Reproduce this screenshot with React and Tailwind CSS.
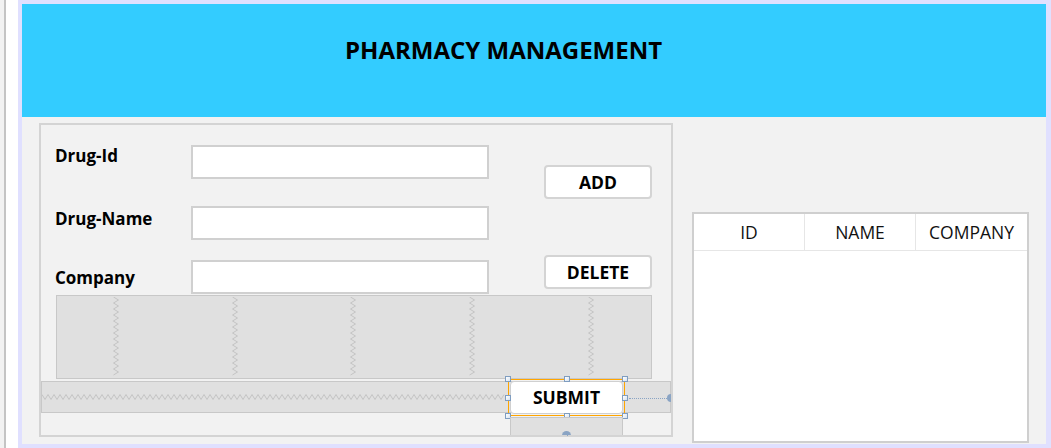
import React from 'react';

const font = { fontFamily: '"Open Sans", "Noto Sans", sans-serif' };

// zigzag polyline points, used for the designer's gap markers
const zigzag = (length, period, amp, vertical) => {
    const pts = [];
    const steps = Math.floor(length / (period / 2));
    for (let i = 0; i <= steps; i++) {
        const a = (i * period) / 2;
        const b = i % 2 === 0 ? 0.5 : amp + 0.5;
        pts.push(vertical ? `${b},${a}` : `${a},${b}`);
    }
    return pts.join(' ');
};

const Handle = ({ className }) => (
    <span className={`absolute w-[6px] h-[6px] border border-[#7f9dc0] bg-gradient-to-br from-white to-[#d6e2f0] ${className}`}></span>
);

const Field = ({ label, labelOffset, className }) => (
    <div className={`flex items-start ${className}`}>
        <label className={`w-[136px] text-[17px] leading-[22px] font-bold text-black ${labelOffset}`}>{label}</label>
        <input className="w-[298px] h-[34px] bg-white border-2 border-[#d0d0d0] outline-none" />
    </div>
);

const Button = ({ children, className }) => (
    <button className={`w-[108px] h-[34px] bg-white border-2 border-[#d4d4d4] rounded-[4px] text-[17.5px] font-bold text-black ${className}`}>
        {children}
    </button>
);

const App = () => {
    return (
        <div className="flex w-[1051px] h-[448px] overflow-hidden bg-[#e0e0ff]" style={font}>
            <div className="w-[4px] bg-[#f2f2f2]"></div>
            <div className="w-[2px] bg-[#c4c4c4]"></div>
            <div className="w-[12px] bg-white"></div>
            <div className="w-[4px]"></div>

            <div className="flex flex-col w-[1024px] mt-[4px] h-[440px]">
                {/* Header */}
                <div className="h-[113px] bg-[#33ccff] pl-[323px] pt-[30px]">
                    <h1 className="text-[24px] leading-[32px] font-bold text-black">PHARMACY MANAGEMENT</h1>
                </div>

                {/* Body */}
                <div className="flex flex-1 bg-[#f2f2f2]">
                    {/* Form panel */}
                    <div className="ml-[17px] mt-[6px] w-[634px] h-[314px] border-2 border-[#d4d4d4] flex flex-col">
                        <div className="flex h-[170px]">
                            <div className="pl-[14px] pt-[20px]">
                                <Field label="Drug-Id" labelOffset="mt-0" />
                                <Field label="Drug-Name" labelOffset="mt-[2px]" className="mt-[27px]" />
                                <Field label="Company" labelOffset="mt-[7px]" className="mt-[20px]" />
                            </div>
                            <div className="flex flex-col ml-[55px] pt-[40px]">
                                <Button>ADD</Button>
                                <Button className="mt-[56px]">DELETE</Button>
                            </div>
                        </div>

                        {/* gap area */}
                        <div className="ml-[15px] w-[596px] h-[84px] bg-[#e0e0e0] border border-[#c8c8c8] grid grid-cols-5">
                            {[0, 1, 2, 3, 4].map((i) => (
                                <div key={i} className="flex justify-center pt-[1px]">
                                    <svg width="7" height="80">
                                        <polyline points={zigzag(80, 6, 5, true)} fill="none" stroke="#c4c4c4" strokeWidth="1" />
                                    </svg>
                                </div>
                            ))}
                        </div>

                        {/* bar holding submit */}
                        <div className="relative mt-[2px] h-[32px] bg-[#e0e0e0] border border-[#c8c8c8] flex items-center">
                            <svg width="464" height="7">
                                <polyline points={zigzag(464, 6, 5, false)} fill="none" stroke="#c4c4c4" strokeWidth="1" />
                            </svg>

                            <div className="absolute left-[466px] top-[-3px] w-[117px] h-[37px] border border-[#ffa500] p-[1px]">
                                <button className="w-full h-full bg-white border border-[#d0d0d0] rounded-[4px] text-[17.5px] font-bold text-black">
                                    SUBMIT
                                </button>
                                <Handle className="left-[-4px] top-[-4px]" />
                                <Handle className="left-[55px] top-[-4px]" />
                                <Handle className="right-[-4px] top-[-4px]" />
                                <Handle className="left-[-4px] top-[15px]" />
                                <Handle className="right-[-4px] top-[15px]" />
                                <Handle className="left-[-4px] bottom-[-4px]" />
                                <Handle className="left-[55px] bottom-[-4px]" />
                                <Handle className="right-[-4px] bottom-[-4px]" />
                                <span className="absolute left-[120px] top-[18px] w-[38px] border-t border-dotted border-[#8aa4c4]"></span>
                                <span className="absolute left-[158px] top-[14px] w-[4px] h-[8px] rounded-l-full bg-[#8aa4c4]"></span>
                                <span className="absolute left-[58px] top-[40px] h-[16px] border-l border-dotted border-[#8aa4c4]"></span>
                            </div>
                        </div>

                        <div className="relative ml-[469px] mt-[4px] w-[113px] h-[18px] bg-[#e0e0e0] border border-[#c8c8c8] border-b-0 overflow-hidden">
                            <span className="absolute left-[51px] top-[13px] w-[9px] h-[9px] rounded-full bg-[#8aa4c4]"></span>
                        </div>
                    </div>

                    {/* Table */}
                    <div className="ml-[19px] mt-[95px] w-[337px] h-[231px] bg-white border-2 border-[#cfcfcf] flex flex-col">
                        <div className="grid grid-cols-3 h-[37px] border-b border-[#e6e6e6]">
                            <div className="flex items-center justify-center border-r border-[#e6e6e6] text-[17.5px] text-[#111]">ID</div>
                            <div className="flex items-center justify-center border-r border-[#e6e6e6] text-[17.5px] text-[#111]">NAME</div>
                            <div className="flex items-center justify-center text-[17.5px] text-[#111]">COMPANY</div>
                        </div>
                        <div className="flex-1"></div>
                    </div>
                </div>
            </div>
        </div>
    );
};

export default App;
